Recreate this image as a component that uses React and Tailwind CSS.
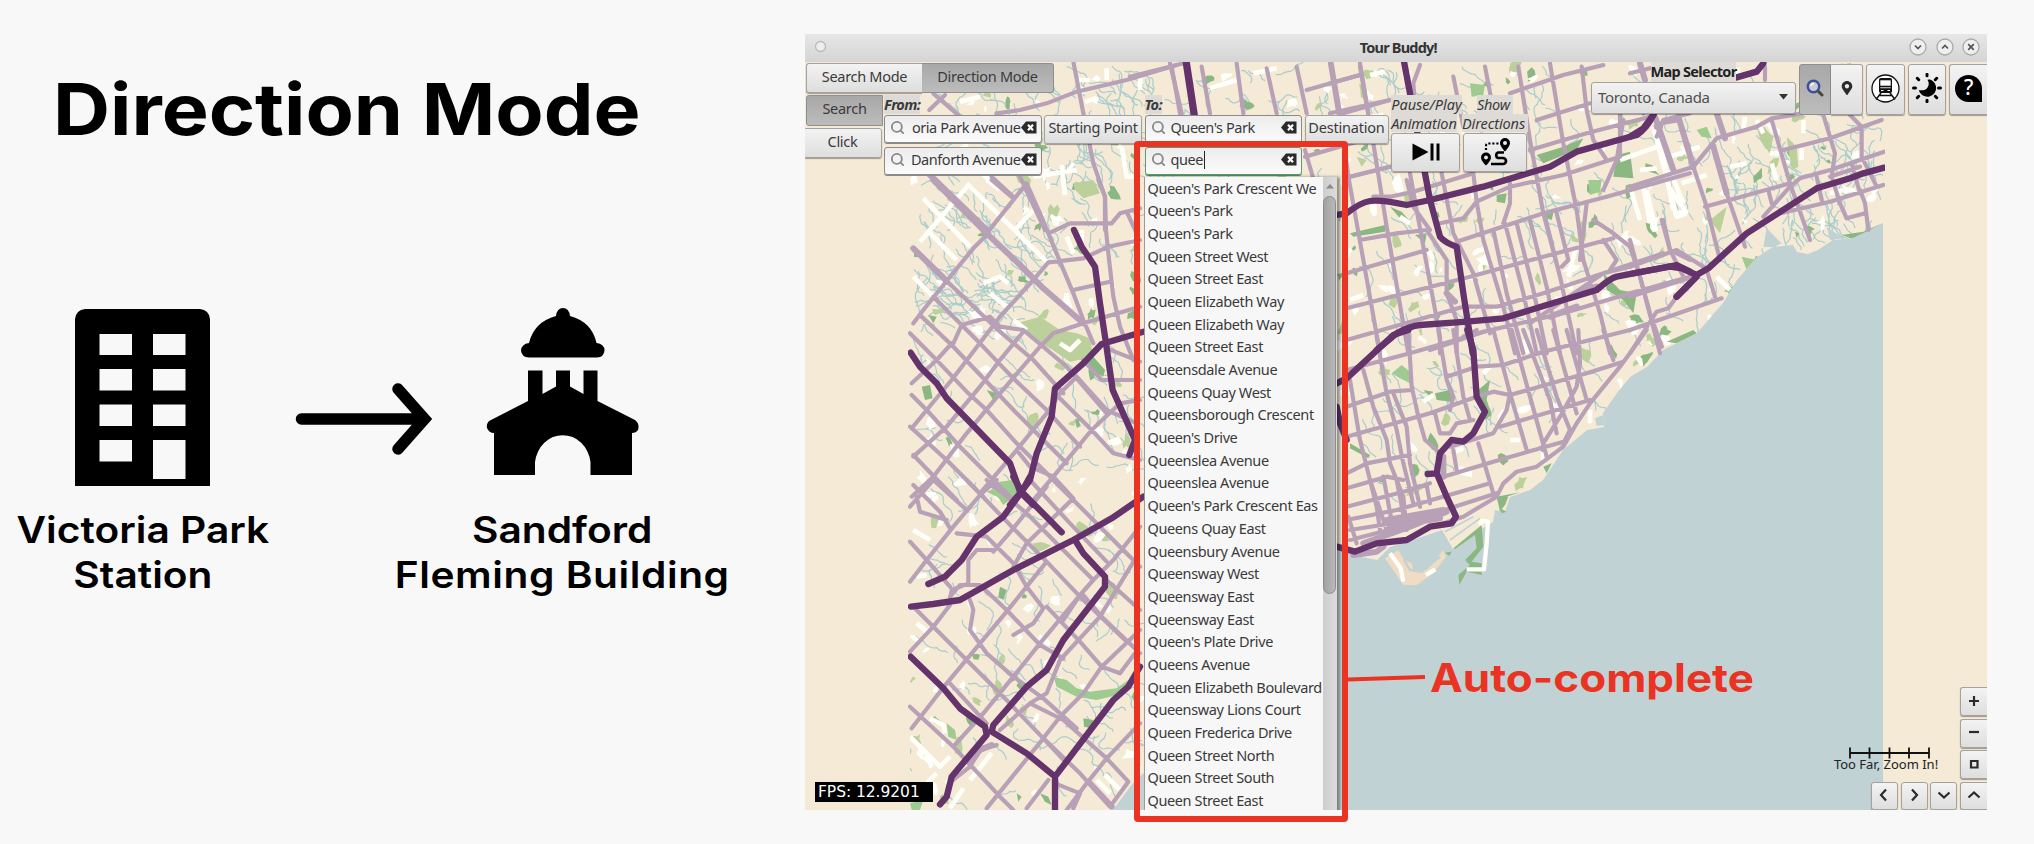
import React from "react";
import { Search } from "lucide-react";
import { FaMapMarkerAlt } from "react-icons/fa";

/* ---------- map data ---------- */

const LAND =
  "M910 62H1883V223L1870 230L1853 238L1833 240L1818 250L1808 254L1797 252L1793 245L1773 247L1757 257L1737 280L1723 303L1697 333L1663 350L1647 367L1630 377L1617 393L1603 413L1604 427L1587 430L1563 450L1543 480L1530 490L1510 497L1505 512L1495 510L1493 522L1475 533L1453 549L1442 530L1413 540L1390 547L1377 560L1362 557L1350 553L1330 548L1240 640L1200 720L1133 783L1113 810H910Z";

const TILES = [
  {
    x: 800, y: 30,
    roads: "M435 195L388 240M400 190L480 260M590 250L660 240L740 220L830 185L980 150L1130 105M820 95L850 250L880 400L915 500V600M1110 100L1145 250M575 440L640 500M660 440L735 600",
    thick: "M385 430L560 600",
    hwy: "M1160 95L1185 260",
    white: "M830 150H870M855 215L890 205M920 115V150M700 440L830 420M785 405L795 495M965 350L980 440H1010M1020 140V180M560 450L600 480M480 215L540 200",
  },
  {
    x: 1130, y: 30,
    roads: "M0 140L160 100M125 110L150 250M215 110L240 250M320 100L340 250M410 115L440 250M500 110L530 250M600 100L625 250M690 100L715 250M530 180L690 135M640 250L780 210M525 380L770 310M525 360L560 480M660 440L780 410",
    thick: "", hwy: "M167 95L192 260",
    white: "M370 130L440 115M240 175L320 150M690 270L760 255",
  },
  {
    x: 800, y: 180,
    roads:
      "M560 160L680 10L720 100L745 160L780 245L820 340L850 420L880 490M575 0L640 55M565 160L520 205L440 303L370 390L340 430M440 303L500 360L600 455L700 540L790 640M745 160L810 130H935L960 100L1020 85M980 95L1010 160M895 0L915 50L918 150L925 220L940 350L960 440L1000 540M700 300L745 247L850 235L925 200L1020 180M820 330L930 305M700 300L600 410L535 495L455 600L380 690L335 745M330 460L400 530L500 635L560 690L650 790L800 940M360 405L455 495L555 600L650 700L740 790L800 850M400 350L540 490L640 595L740 690L840 800M460 490L485 435L570 410L600 440L670 450L800 560L920 700M720 500L760 460L850 430L1020 380M720 500L600 640L500 760L400 890L335 950M335 610L410 540L455 490M335 645L380 690L480 800L580 900L640 960M670 455L600 540L540 620L440 740L340 830M330 740L440 840L550 950M340 825L470 960M1020 660L960 670L875 750L760 890L700 960M775 650L875 750L940 820L1020 840M830 590L920 690L1010 730M920 505L1020 545M850 540L905 600L1020 600M830 590L780 640L740 700L650 810L540 940M650 810L690 860L760 890L820 955",
    thick: "M400 0L560 160L650 245L730 325L850 430M340 205L440 303",
    hwy: "M822 150L845 200L885 260L900 370L918 490L938 630L1005 780L988 825M1030 455L905 492L850 550L765 625L755 710L710 820L690 900L660 940L630 975M332 518L360 560L410 610L440 655L630 850L660 935L700 975",
    white: "M370 55L510 200M360 185L510 10M500 10L740 245M380 150L470 240M700 90L645 150M340 290L400 350M790 0L795 45M550 310L600 290L625 310M570 340L620 380M800 170L820 220M845 150V200M640 420L680 450M780 490L810 510L840 480",
  },
  {
    x: 800, y: 480,
    roads:
      "M330 80L400 0M340 15L420 95L450 145M400 0L500 90M500 0L640 145L740 245L840 350L975 480M560 0L680 100L780 200L880 300M690 0L810 130L920 245M760 0L960 200L1020 260M590 0L540 45L460 140L380 240L330 305M815 60L680 190L640 260M740 20L640 145L580 215M330 185L380 240L450 320M470 160L560 170L640 250L680 320L730 385L700 430L640 465M580 210H530L505 240V310L455 330L450 360M450 350L480 315H540L620 390L720 495L790 535M340 380L400 440L500 540L600 640L730 775L800 850M450 375L400 440L330 515M510 360L520 390L510 450L560 520L640 590L730 655L830 745M740 245L680 320L620 395L540 490L440 610L335 745M840 345L720 490L640 590L550 700L460 800M1020 140L940 240L880 300L840 345L790 420M1010 230L900 410L780 540L740 640L690 670L600 750M1020 450L905 560L850 640L780 710L730 775L560 985M840 485L905 560L960 580L1005 520M850 345L905 410L1020 520M920 300L1020 390M450 610L560 730M330 680L460 800L600 950L640 990M590 795L540 810L510 860L460 900M730 775L840 880L930 980M1020 730L920 835L860 910L800 990M690 670L790 720L920 835L985 905L930 980M350 50L360 95L440 120M745 900L680 985M765 910L840 940L820 985M740 380L840 485",
    thick: "M575 795L540 810L510 850M870 910L935 980",
    hwy: "M640 -10L665 35L690 -10M665 35L610 110L530 170L485 240L435 290L385 312M665 35L785 157M333 380L400 372L480 360L640 270L820 180L935 115L1030 50M825 180L850 220L915 290V320L790 480L740 570L680 620L580 735L575 755L680 820L765 890V1000M1020 560L985 620L940 660L765 890M332 530L430 625L480 685L555 740L560 765L455 890L440 950L420 973",
    white: "M330 770L420 860L450 830M575 820L510 900M490 925L450 985M350 430L380 455M890 900L930 940M915 885L960 930M390 715L430 735L435 760M340 150L390 180M350 290L380 285M410 880L370 920",
  },
  {
    x: 1330, y: 60,
    roads:
      "M5 10L30 160L55 350L100 600L150 880M90 20L130 250L170 500L235 880M270 15L250 70L260 200M240 340L280 560L330 830V880M335 340L370 520L430 640L480 820M370 50L400 200M430 340L440 425L460 540L520 740L555 880M465 20L500 200M565 20L600 240L640 460L690 650M660 10L700 250L740 450L760 600L810 760L840 880M755 20L770 150L790 240L830 300M490 510L530 700L580 880M525 490L580 700L620 880M560 490L610 690L650 880M600 480L650 680L690 880M645 470L690 650L740 880M680 460L715 600L695 620M540 370V430L520 490M0 70L90 45M0 160L180 120M540 100L700 45L820 15M600 270L770 220L960 170M620 180L780 130M60 350L180 320M130 410H180L250 395L430 340M330 490L400 475L440 425L540 380L700 345L870 290L870 160M380 545L640 460L830 410L1080 340M90 540L200 520L290 510L350 600V700L380 780V880M230 360L250 440L300 510M50 640L290 570M50 745L420 650L640 590L850 535M50 840L400 740H500L640 700L1000 580M300 870L460 815L700 760L900 700L1080 650M600 790L820 640L900 620M770 430L750 600M790 480L850 520L900 560L930 650L990 880M820 540L860 600L840 630M1000 480L1020 570L1080 600M980 230L1000 180L1080 160M820 390L860 300L880 180",
    thick: "M980 200L990 200M350 700L375 725M740 700L800 680M660 770L740 740",
    hwy: "M222 5L240 100L285 340L300 420L330 530Q345 548 380 560L400 700L428 880M20 465L50 460Q90 428 120 423T230 435L300 420L460 380L660 320L740 275L920 225Q950 205 970 165M140 870L200 820Q240 798 270 795L410 785L520 775L650 735L800 690Q840 655 860 650L1040 615L1080 635M1040 710L1080 670",
    white: "M970 200L1040 470L1070 460M870 300L1010 250M900 380L930 480M940 380L960 490M1020 330L1060 430M210 470L240 490M60 720L100 705M930 330L980 325M120 45L165 35M735 570L715 650",
  },
  {
    x: 1630, y: 60,
    roads:
      "M190 320L230 440L270 600M250 260L290 400L345 560M425 180L480 370L540 540M580 165L615 280L605 350L630 430L650 475L705 460M660 165L695 200V290L740 380M755 180L600 235L460 270M763 275L600 330L510 355L480 380L400 470M760 375L600 425L430 465M0 380L190 320L260 235L380 200L425 175L520 160M225 440L480 370M690 390L705 430L715 510M665 310L690 400M560 350L575 420M415 390L425 430M95 480L120 570L160 650M0 620L140 570L220 620M230 630L255 710M0 810L275 715M0 710L190 650M0 540L60 760L95 860M0 880L80 755L115 745L140 710M90 190L150 180M405 20V60M0 40L100 15M600 350L690 320M35 130L40 160",
    thick: "M75 170L130 330M145 170L190 320M260 160L285 235M250 260L290 400M30 10L45 60",
    hwy: "M250 70L320 52L380 35L400 10M0 230L40 205L70 165M0 642L120 620L155 625L200 645L235 625L350 520L560 385L660 355L700 340L763 323M200 650L140 710",
    white: "M90 240L130 450M300 320L350 310M120 290L210 260M155 370L230 345M520 180V220M515 265V300M380 180L400 220M345 170L340 210M420 280H450M425 310L440 360M115 380L165 450M50 390L70 480M260 650L300 690M130 460L175 455M820 420L850 410M600 400L640 390",
  },
  {
    x: 1330, y: 330,
    roads:
      "M60 150L90 330L140 530L150 600M100 120L130 230L170 330L180 400L220 500L230 600M140 20L170 190L200 300L220 400L250 520M190 190L230 290L240 400L270 530M235 0L245 170L265 260L285 330L320 360M325 0L350 150L370 200L360 240M370 0L400 200L420 270M490 0L540 190L590 360M545 0L600 200L650 380M580 0L660 210L680 310M620 0L680 200L720 300L700 340M670 0L740 250M710 0L770 210M745 0L750 100L740 170L690 260L640 340M820 0L850 90M975 0L995 50M950 0L870 110L780 220L740 280L700 350L620 410L560 425L520 460L500 500L400 560L340 580M540 190L530 240L490 310L360 350M445 340L490 490M370 360L380 420M315 250L330 310H360L380 280L430 270M50 120L240 70L480 0M50 230L180 185L245 180M50 320L300 250L440 200L490 185L540 195L770 130L880 95M350 140L440 110L520 105L640 65L900 0M510 290L780 210M50 430L110 400L240 375M340 440L490 395L700 335M50 475L170 440L220 450M50 530L240 480L300 460M50 570L200 540L480 460M60 600L250 570L500 490M60 630L330 560M120 450L170 600M160 440L190 600M200 450L225 580M290 465L300 520M55 560L80 640M400 20L440 0",
    thick: "M100 640L240 590L350 545M170 570L340 540M180 590L330 565M70 675L140 665L160 650M340 380V440",
    hwy: "M412 0L430 60L440 200L465 245L430 310L400 335L365 330L330 370L320 430L293 432M320 430L350 500L378 560L365 580L300 590L230 630L140 640L75 665L20 650M235 0L190 15L50 145L20 160M20 230L30 280L50 330",
    white: "M460 130L480 110M375 365L400 355M780 240V280M640 365V390M310 195L280 215M540 330H570M580 30L595 70",
  },
];

const GREENS = [
  [800, 180, "M650 430L720 410L780 450L830 460L870 475L880 530L810 545L750 505L700 480Z", "#bbd09a"],
  [800, 180, "M860 540L880 530L915 570L910 590L880 575Z", "#8bb882"],
  [800, 180, "M365 620L390 615L398 655L375 660Z M560 630L590 640L580 660ZM385 405L410 410L400 430Z", "#8bb882"],
  [800, 180, "M820 10L880 0L900 40L850 55L825 30Z", "#bbd09a"],
  [800, 180, "M560 935L640 900L650 950L610 960Z", "#9fcb90"],
  [800, 480, "M565 10L640 0L655 40L610 75Z", "#9fcb90"],
  [800, 480, "M760 590L800 600L830 625L870 635L950 625L985 600L975 640L890 660L830 650L770 620Z", "#9fcb90"],
  [800, 480, "M600 320L620 330L610 360L595 350ZM850 715L880 720L875 745L852 740ZM650 940L665 950L655 965ZM720 940L745 950L755 975L735 965Z", "#8bb882"],
  [800, 480, "M330 970L370 960L360 990H335ZM440 730L465 750L470 780L445 770Z", "#9fcb90"],
  [1330, 60, "M420 70L465 75L460 105L425 110Z", "#9fcb90"],
  [1330, 60, "M860 285L900 275L910 355L850 350Z", "#8bb882"],
  [1330, 60, "M775 360L815 360L810 395L780 405Z", "#9fcb90"],
  [1330, 60, "M60 520L165 495V515L70 530ZM180 440L215 455L245 490L210 475ZM255 525L290 520L285 550ZM500 405L530 400L525 430L500 425ZM645 455L670 460L665 480L650 475Z", "#8bb882"],
  [1330, 60, "M620 285L700 260L760 235L740 270L640 310Z", "#8bb882"],
  [1330, 60, "M820 640L870 690L920 700L910 760L880 720L830 690Z", "#8bb882"],
  [1330, 60, "M80 290L110 300L95 320Z", "#bbd09a"],
  [1630, 60, "M200 210L230 200L245 235L215 230ZM335 590L380 600L350 630Z", "#9fcb90"],
  [1630, 60, "M380 190L430 230L420 280L390 240ZM470 230L500 260L505 320L485 330ZM240 480L290 440L270 520Z", "#bbd09a"],
  [1630, 60, "M635 525L700 515L758 490L740 510L670 538ZM110 845L190 810L205 825L140 850ZM30 890L70 875L50 910ZM495 515L508 520L500 535Z", "#8bb882"],
  [1330, 330, "M315 190L360 180L365 215L320 210ZM280 180L310 185L300 200ZM445 180L480 150L470 210L485 255L465 270Z", "#8bb882"],
  [1330, 330, "M185 130L215 105L240 125V160L210 145Z", "#9fcb90"],
  [1330, 330, "M60 340L120 375L115 385L60 355ZM500 500L570 487L530 500L525 525L505 520ZM935 75L970 70L940 110ZM640 410L665 400L650 430Z", "#8bb882"],
];

function rng(seed) {
  let s = seed;
  return () => {
    s = (s * 1664525 + 1013904223) % 4294967296;
    return s / 4294967296;
  };
}

/* meandering creeks: regions are [x, y, w, h, count, heading] */
function creeks() {
  const r = rng(77);
  let d = "";
  const areas = [
    [912, 185, 120, 110, 70, 0.7], [1040, 70, 110, 180, 40, 1.2], [912, 280, 110, 60, 34, 0.2],
    [910, 340, 230, 460, 110, 0.8], [1350, 64, 530, 250, 170, 1.1], [1350, 300, 280, 180, 50, 1],
    [930, 64, 460, 110, 90, 0.9], [1700, 120, 180, 120, 60, 1.3],
  ];
  for (const [x, y, w, h, n, a0] of areas) {
    for (let i = 0; i < n; i++) {
      let px = x + r() * w, py = y + r() * h, a = a0 + (r() - 0.5) * 1.6;
      d += `M${px.toFixed(1)} ${py.toFixed(1)}`;
      const steps = 5 + Math.floor(r() * 11);
      for (let k = 0; k < steps; k++) {
        a += (r() - 0.5) * 1.5;
        px += Math.cos(a) * 3.2;
        py += Math.sin(a) * 3.2;
        d += `L${px.toFixed(1)} ${py.toFixed(1)}`;
        a = a * 0.8 + a0 * 0.2;
      }
    }
  }
  return d;
}

/* small irregular patches, each built from a few overlapping facets */
function blobs(seed, n, size) {
  const r = rng(seed);
  let d = "";
  for (let i = 0; i < n; i++) {
    const left = r() < 0.33;
    const cx = left ? 912 + r() * 228 : 1150 + r() * 730;
    const cy = left ? 70 + r() * 735 : 66 + r() * 430;
    const k = 7 + Math.floor(r() * 4);
    const s = size * (0.5 + r());
    const rot = r() * 3;
    for (let j = 0; j < k; j++) {
      const t = (j / k) * Math.PI * 2;
      const rad = s * (0.4 + r() * 0.9);
      const ex = Math.cos(t) * rad * 1.35, ey = Math.sin(t) * rad * 0.8;
      const x = cx + ex * Math.cos(rot) - ey * Math.sin(rot);
      const y = cy + ex * Math.sin(rot) + ey * Math.cos(rot);
      d += `${j ? "L" : "M"}${x.toFixed(1)} ${y.toFixed(1)}`;
    }
    d += "Z";
  }
  return d;
}

const CREEKS = creeks();
const BLOBS = [
  [blobs(5, 100, 4.5), "#8bb882"],
  [blobs(19, 100, 5), "#bbd09a"],
  [blobs(42, 270, 4.4), "#fffffa"],
];

const at = (t) => `translate(${t.x} ${t.y}) scale(0.33333)`;

function CityMap() {
  return (
    <svg className="absolute inset-0 h-full w-full" viewBox="805 62 1182 748" preserveAspectRatio="none" fill="none">
      <defs>
        <clipPath id="land"><path d={LAND} /></clipPath>
        <clipPath id="extent"><rect x="908" y="62" width="977" height="748" /></clipPath>
      </defs>
      <rect x="805" y="62" width="1182" height="748" fill="#f5ead6" />
      <rect x="1113" y="62" width="770" height="748" fill="#c1d2d5" />
      <path d={LAND} fill="#f5ead6" />
      <g clipPath="url(#land)">
        <path d={CREEKS} stroke="#a9cdcd" strokeWidth="1.2" />
        {BLOBS.map(([d, c]) => <path key={c} d={d} fill={c} />)}
        {GREENS.map(([x, y, d, c], i) => <path key={i} d={d} fill={c} transform={at({ x, y })} />)}
        {TILES.map((t, i) => (
          <path key={i} d={t.white} transform={at(t)} stroke="#fffffa" strokeWidth="14" strokeLinejoin="round" />
        ))}
      </g>
      <g transform={at({ x: 1330, y: 330 })}>
        <path d="M165 685L205 660L222 690L245 700L250 725L290 720L340 660L348 680L310 730L260 765L220 765Z" fill="#efdcc2" />
        <path d="M222 690L240 720L275 725L330 680" stroke="#c1d2d5" strokeWidth="7" />
        <path d="M345 668L365 665L358 678ZM370 655L455 585L460 650L425 695L455 700V735L410 725L388 765L385 735L420 705L405 690L440 655L435 615L375 657Z" fill="#8bb882" />
        <path d="M180 670L212 715L220 755M288 735L316 718M450 585L455 572L474 575L470 640L462 718H410" stroke="#fffffa" strokeWidth="13" strokeLinejoin="round" />
        <path d="M345 605L430 560M360 630L450 565" stroke="#c1d2d5" strokeWidth="5" />
        <path d="M500 500L535 500L525 525L510 545ZM510 535L530 545L515 550Z" fill="#8bb882" />
        <path d="M795 265L820 255L822 285L800 288Z" fill="#c1d2d5" />
      </g>
      <g transform={at({ x: 1630, y: 60 })}>
        <path d="M410 505L455 550L430 562L400 560ZM590 500L640 535L600 540Z" fill="#c1d2d5" />
      </g>
      <g clipPath="url(#extent)" strokeLinecap="round" strokeLinejoin="round">
        {TILES.map((t, i) => (
          <g key={i} transform={at(t)} stroke="#b8a0b6">
            <path d={t.roads} strokeWidth="12.5" />
            <path d={t.thick} strokeWidth="18" />
          </g>
        ))}
        {TILES.map((t, i) => (
          <path key={i} d={t.hwy} transform={at(t)} stroke="#65336c" strokeWidth="19" />
        ))}
      </g>
    </svg>
  );
}

/* ---------- widgets ---------- */

const RAISED = "bg-linear-to-b from-[#f3f3f3] to-[#dedede] border border-[#a5a29e] shadow-[0_1px_1px_rgba(0,0,0,0.35)]";
const PRESSED = "bg-linear-to-b from-[#a8a8a8] to-[#bcbcbc] border border-[#8f8f8f]";

function Btn({ className, pressed, children }) {
  return (
    <div className={`flex shrink-0 items-center justify-center whitespace-nowrap rounded-[3px] pb-[2px] ${pressed ? PRESSED : RAISED} ${className}`}>
      {children}
    </div>
  );
}

function ClearIcon() {
  return (
    <svg className="h-[13px] w-[16px] shrink-0" viewBox="0 0 16 13">
      <path d="M0 6.5L5 0.5H15.5V12.5H5Z" fill="#2b2b2b" />
      <path d="M7 3.8L12 9.2M12 3.8L7 9.2" stroke="#fff" strokeWidth="2.2" />
    </svg>
  );
}

function Entry({ text, end, focused, caret }) {
  return (
    <div className={`flex h-[28.500px] w-[157.5px] items-center rounded-[3px] border bg-linear-to-b from-[#ececec] to-[#fbfbfb] pb-[2px] pl-[5px] pr-[4px] tracking-[-0.450px] ${focused ? "border-[#5b9a72] shadow-[0_1px_0_#4b9560]" : "border-[#8d8b88] shadow-[0_1px_0_#8d8b88]"}`}>
      <Search className="mr-[5px] size-[15px] shrink-0 text-[#8a8a8a]" strokeWidth={3} />
      <div className={`flex flex-1 items-center whitespace-nowrap ${end ? "justify-end" : ""}`}>
        <span>{text}</span>
        {caret && <span className="ml-px h-[18px] w-px bg-[#222]" />}
      </div>
      <ClearIcon />
    </div>
  );
}

const ROWS = [
  "Queen's Park Crescent We", "Queen's Park", "Queen's Park", "Queen Street West", "Queen Street East",
  "Queen Elizabeth Way", "Queen Elizabeth Way", "Queen Street East", "Queensdale Avenue", "Queens Quay West",
  "Queensborough Crescent", "Queen's Drive", "Queenslea Avenue", "Queenslea Avenue", "Queen's Park Crescent Eas",
  "Queens Quay East", "Queensbury Avenue", "Queensway West", "Queensway East", "Queensway East",
  "Queen's Plate Drive", "Queens Avenue", "Queen Elizabeth Boulevard", "Queensway Lions Court",
  "Queen Frederica Drive", "Queen Street North", "Queen Street South", "Queen Street East",
];

function Completions() {
  return (
    <div className="absolute left-[-1px] top-[1.500px] z-10 flex h-[640px] w-[193px] border-l border-[#9a9a9a] bg-[#f7f7f7] shadow-[3px_0_3px_rgba(0,0,0,0.4)]">
      <ul className="w-[178px] whitespace-nowrap pl-[3px] tracking-[-0.380px]">
        {ROWS.map((r, i) => (
          <li key={i} className="h-[22.69px] leading-[22.69px]">{r}</li>
        ))}
      </ul>
      <div className="flex flex-1 flex-col items-center bg-linear-to-r from-[#cdcdcd] to-[#dcdcdc]">
        <svg className="my-[5px] h-[9px] w-[8px]" viewBox="0 0 8 9"><path d="M0 6.5L4 2L8 6.5Z" fill="#8a8a8a" /></svg>
        <div className="h-[398px] w-[13px] rounded-full border border-[#8b8b8b] bg-linear-to-r from-[#a2a2a2] to-[#b9b9b9]" />
      </div>
    </div>
  );
}

function Label({ children, className }) {
  return <div className={`whitespace-nowrap bg-[#dedbd6] italic leading-[18px] h-[18.500px] ${className}`}>{children}</div>;
}

function RouteIcon() {
  return (
    <svg className="h-[28px] w-[31px]" viewBox="0 0 31 28">
      <path fillRule="evenodd" d="M25 0A5 5 0 0 1 30 5C30 8.600 25 13.500 25 13.500S20 8.600 20 5A5 5 0 0 1 25 0ZM25 3A2 2 0 1 0 25 7A2 2 0 1 0 25 3ZM6 14.500A5 5 0 0 1 11 19.500C11 23 6 27.500 6 27.500S1 23 1 19.500A5 5 0 0 1 6 14.500ZM6 17.500A2 2 0 1 0 6 21.500A2 2 0 1 0 6 17.500Z" />
      <path d="M24 14.500H18A3 3 0 0 0 18 20H23A3 3 0 0 1 23 26H11" fill="none" stroke="#000" strokeWidth="2.700" />
      <path d="M18.500 5.500H8Q6 5.500 6 8V12" fill="none" stroke="#000" strokeWidth="2.200" strokeDasharray="2.200 1.800" />
    </svg>
  );
}

function TrainIcon() {
  return (
    <svg className="size-[29px]" viewBox="0 0 29 29">
      <circle cx="14.500" cy="14.500" r="13.500" fill="#fff" stroke="#111" strokeWidth="1.300" />
      <rect x="8" y="4" width="13" height="15" rx="1.800" fill="#111" />
      <rect x="9.300" y="6.300" width="10.400" height="5.400" fill="#fff" />
      <path d="M9.300 13.700H19.700" stroke="#bbb" strokeWidth="1.200" />
      <path d="M10 16.500H12.500M16.500 16.500H19" stroke="#fff" strokeWidth="1" />
      <path d="M10 19L5 25.500M19 19L24 25.500M8.500 21.500H20.500" stroke="#111" strokeWidth="1.500" fill="none" />
    </svg>
  );
}

function SunIcon() {
  return (
    <svg className="size-[30px]" viewBox="0 0 30 30">
      <path d="M18 6.500A8.800 8.800 0 1 1 6.800 17.200Q13.500 18 15.500 14.500Q18 11 15.500 6.800Q17 6.200 18 6.500Z" />
      <path d="M15 1.300V2.700M15 27.300V28.700M1.500 15H3.500M26.500 15H28.500M5.300 5.300L6.700 6.700M23.300 23.300L24.700 24.700M24.700 5.300L23.300 6.700M5.300 24.700L6.700 23.300" stroke="#000" strokeWidth="3" strokeLinecap="round" />
    </svg>
  );
}

function MagnifierIcon() {
  return (
    <svg className="size-[18px]" viewBox="0 0 18 18">
      <path d="M11.500 11.500L16 16" stroke="#4d4534" strokeWidth="3" strokeLinecap="round" />
      <circle cx="7.500" cy="7.500" r="5.700" fill="#c9cbd3" stroke="#3f4e9b" strokeWidth="2.400" />
      <path d="M5 7A3 3 0 0 1 8 4.500" stroke="#fff" strokeWidth="1.300" fill="none" />
    </svg>
  );
}

function WinBtn({ d }) {
  return (
    <svg className="size-[18px]" viewBox="0 0 18 18">
      <circle cx="9" cy="9" r="8" fill="#efefef" stroke="#aaa" strokeWidth="1.300" />
      <path d={d} fill="none" stroke="#555" strokeWidth="1.700" />
    </svg>
  );
}

function NavBtn({ d, className }) {
  return (
    <Btn className={`w-[27px] ${className}`}>
      <svg className="size-[14px]" viewBox="0 0 14 14"><path d={d} fill="none" stroke="#2b2b2b" strokeWidth="2.200" /></svg>
    </Btn>
  );
}

function AppWindow() {
  return (
    <div className="flex h-[776px] w-[1182px] shrink-0 flex-col overflow-hidden font-['Noto_Sans','Open_Sans',sans-serif] text-[14.500px] tracking-[-0.300px] text-[#3a3a3a]">
      <header className="flex h-[28px] shrink-0 items-center bg-linear-to-b from-[#e7e7e7] to-[#d4d4d4] pl-[8.500px] pr-[7px]">
        <svg className="mb-1 size-[13px]" viewBox="0 0 13 13"><circle cx="6.500" cy="6.500" r="5" fill="#eee" stroke="#bbb" strokeWidth="1.300" /></svg>
        <h2 className="flex-1 pl-[61px] text-center font-bold tracking-[-0.800px] text-[#333]">Tour Buddy!</h2>
        <div className="mb-[3px] flex gap-[8.500px]">
          <WinBtn d="M6 7.500L9 10.500L12 7.500" />
          <WinBtn d="M6 10.500L9 7.500L12 10.500" />
          <WinBtn d="M6.200 6.200L11.800 11.800M11.800 6.200L6.200 11.800" />
        </div>
      </header>

      <div className="relative h-[748px]">
        <CityMap />
        <div className="absolute inset-0 flex flex-col justify-between">
          <div className="flex justify-between">
            <div className="pl-px pt-px">
              <div className="flex">
                <Btn className="h-[30px] w-[116px] rounded-r-none border-r-0">Search Mode</Btn>
                <Btn pressed className="h-[30px] w-[132px] rounded-l-none border-l-0">Direction Mode</Btn>
              </div>
              <div className="flex pt-[2px]">
                <div className="flex w-[78px] flex-col gap-[2px]">
                  <Btn pressed className="h-[30.500px] w-[77px] rounded-r-none">Search</Btn>
                  <Btn className="ml-[-3px] h-[30.500px] w-[79px]">Click</Btn>
                </div>
                <div className="grid grid-cols-[157.5px_98px_157.5px_84px] gap-x-[2.500px]">
                  <div className="flex h-[19.500px]"><Label className="font-bold tracking-[-0.600px]">From:</Label></div>
                  <div />
                  <div className="flex"><Label className="font-bold tracking-[-0.600px]">To:</Label></div>
                  <div />
                  <Entry text="oria Park Avenue" end />
                  <Btn className="h-[29px]">Starting Point</Btn>
                  <Entry text="Queen's Park" />
                  <Btn className="h-[29px] tracking-[-0.200px]">Destination</Btn>
                  <div className="pt-[3px]"><Entry text="Danforth Avenue" end /></div>
                  <div />
                  <div className="relative pt-[3px]">
                    <Entry text="quee" focused caret />
                    <div className="relative"><Completions /></div>
                  </div>
                </div>
                <div className="ml-[2.500px] flex gap-[3px]">
                  <div className="flex w-[69px] flex-col text-center">
                    <Label className="w-[71px] tracking-normal">Pause/Play</Label>
                    <Label className="w-[66px] tracking-[-0.100px]">Animation</Label>
                    <Btn className="mt-px h-[39px]">
                      <svg className="h-[18px] w-[28px]" viewBox="0 0 28 18"><path d="M0.500 0.500L16.500 9L0.500 17.500ZM18.500 0.500H21.500V17.500H18.500ZM24.500 0.500H27.500V17.500H24.500Z" /></svg>
                    </Btn>
                  </div>
                  <div className="flex w-[64px] flex-col items-center">
                    <Label className="w-[36px]">Show</Label>
                    <Label className="w-[66px] tracking-[-0.100px]">Directions</Label>
                    <Btn className="mt-px h-[39px] w-full"><RouteIcon /></Btn>
                  </div>
                </div>
              </div>
            </div>

            <div className="flex">
              <div className="flex w-[205px] flex-col items-center">
                <div className="h-[20px] bg-[#dedbd6] font-bold leading-[19px] tracking-[-0.700px] text-[#222]">Map Selector</div>
                <Btn className="h-[32px] w-[205px] justify-between! pb-0 pl-[6px] pr-[7px] text-[15px] text-[#505050]">
                  Toronto, Canada
                  <svg className="h-[6px] w-[9px]" viewBox="0 0 9 6"><path d="M0 0H9L4.500 5.500Z" fill="#333" /></svg>
                </Btn>
              </div>
              <div className="ml-[3px] flex pt-[1.500px]">
                <Btn pressed className="h-[51px] w-[32px] rounded-r-none"><MagnifierIcon /></Btn>
                <Btn className="mr-[3px] h-[51px] w-[32px] rounded-l-none border-l-0"><FaMapMarkerAlt className="size-[14px] text-[#2b2b2b]" /></Btn>
                <Btn className="mr-[3px] h-[51px] w-[38.500px]"><TrainIcon /></Btn>
                <Btn className="mr-[3px] h-[51px] w-[38.500px]"><SunIcon /></Btn>
                <Btn className="h-[51px] w-[38px] rounded-r-none border-r-0">
                  <span className="flex size-[27px] items-center justify-center rounded-[13.500px] rounded-br-none bg-black text-[21px] font-medium text-white">?</span>
                </Btn>
              </div>
            </div>
          </div>

          <div className="flex items-end justify-between">
            <div className="mb-[8px] ml-[10px] h-[20px] w-[118px] bg-black pl-[3px] font-['DejaVu_Sans',sans-serif] text-[15.500px] leading-[20px] tracking-[-0.050px] text-white">FPS: 12.9201</div>
            <div className="flex flex-col items-end gap-[2.500px]">
              <NavBtn className="h-[29px] rounded-r-none border-r-0" d="M7 2V12M2 7H12" />
              <div className="flex items-end gap-[22px]">
                <div className="flex w-[104px] flex-col items-center text-[#222]">
                  <svg className="ml-[6px] h-[12px] w-[81px]" viewBox="0 0 81 12"><path d="M1 6H80M1 0.500V11.500M20.500 0.500V11.500M40.500 0.500V11.500M60 0.500V11.500M80 0.500V11.500" stroke="#111" strokeWidth="1.800" /></svg>
                  <span className="h-[20px] whitespace-nowrap text-[13px] leading-[11px] tracking-normal">Too Far, Zoom In!</span>
                </div>
                <div className="flex flex-col gap-[2.500px]">
                  <NavBtn className="h-[29px] rounded-r-none border-r-0" d="M2 7H12" />
                  <NavBtn className="h-[29px] rounded-r-none border-r-0" d="M4 4H10.500V10.500H4Z" />
                </div>
              </div>
              <div className="flex gap-[2.700px]">
                <NavBtn className="h-[28.500px]" d="M9 1.500L4 7L9 12.500" />
                <NavBtn className="h-[28.500px]" d="M5 1.500L10 7L5 12.500" />
                <NavBtn className="h-[28.500px]" d="M1.500 4.500L7 9.500L12.500 4.500" />
                <NavBtn className="h-[28.500px] rounded-r-none border-r-0" d="M1.500 9.500L7 4.500L12.500 9.500" />
              </div>
            </div>
          </div>
        </div>
      </div>
    </div>
  );
}

function Building() {
  return (
    <svg className="h-[177px] w-[135px]" viewBox="0 0 135 177">
      <path fillRule="evenodd" d="M0 177V10Q1 1 10 0H125Q134 1 135 10V177ZM24.500 25V46H57V25ZM78 25V46H110.500V25ZM24.500 60V81.500H57V60ZM78 60V81.500H110.500V60ZM24.500 95.500V117H57V95.500ZM78 95.500V117H110.500V95.500ZM24.500 131V152.500H57V131ZM78 131V170H110.500V131Z" />
    </svg>
  );
}

function Chapel() {
  return (
    <svg className="h-[168px] w-[153px]" viewBox="486 307 153 168">
      <path d="M563 308Q569 308 570 316Q592 322 596.500 343Q604.500 344 604.500 350.500Q604 357 597 357.500H529Q521.500 357 521 350.500Q521.500 344 529 343Q534 322 556 316Q557 308 563 308Z" />
      <path d="M528 370.500H542.500V394L556 386.500V370.500H570V386.500L583.500 394V370.500H597.500V401L635 420Q640 424 638 430Q636 433 632 433V475H590.500V462A28 31 0 0 0 535 462V475H494V433Q489 433 487 428Q486 423 490 420.500L528 401Z" />
    </svg>
  );
}

export default function App() {
  return (
    <main className="relative flex h-[844px] w-[2034px] overflow-hidden bg-[#f8f8f8] font-['Inter',sans-serif] text-black">
      <section className="flex w-[805px] shrink-0 flex-col pt-[64px]">
        <h1 className="ml-[53px] origin-left scale-x-[1.112] self-start whitespace-nowrap text-[71px] font-bold leading-[90px]">Direction Mode</h1>
        <div className="flex pt-[153px]">
          <div className="flex w-[285px] flex-col items-center pt-[2px]">
            <Building />
            <p className="mt-[21px] scale-x-[1.1] whitespace-nowrap text-center text-[37px] font-semibold leading-[45px]">Victoria Park<br />Station</p>
          </div>
          <svg className="ml-[9px] mt-[75px] h-[74px] w-[140px] shrink-0" viewBox="294 382 140 74">
            <path d="M301.500 419H424M398 389L424.500 419L398 449" fill="none" stroke="#000" strokeWidth="11.500" strokeLinecap="round" strokeMiterlimit="8" />
          </svg>
          <div className="ml-[-42px] flex w-[341px] flex-col items-center">
            <Chapel />
            <p className="mt-[32px] scale-x-[1.1] whitespace-nowrap text-center text-[37px] font-semibold leading-[45px]">Sandford<br /><span className="tracking-[0.500px]">Fleming Building</span></p>
          </div>
        </div>
      </section>
      <section className="pt-[34px]"><AppWindow /></section>

      <div className="absolute left-[1134px] top-[141px] z-20 h-[681px] w-[214px] rounded-[4px] border-[6px] border-[#ea3323]" />
      <div className="absolute left-[1348px] top-[652px] z-20 flex items-center">
        <svg className="h-[8px] w-[77px]" viewBox="0 0 77 8"><path d="M0 5.500L77 3" stroke="#ea3323" strokeWidth="4" /></svg>
        <span className="ml-[5px] origin-left scale-x-[1.127] whitespace-nowrap text-[39px] font-bold leading-[52px] text-[#ea3323]">Auto-complete</span>
      </div>
    </main>
  );
}
